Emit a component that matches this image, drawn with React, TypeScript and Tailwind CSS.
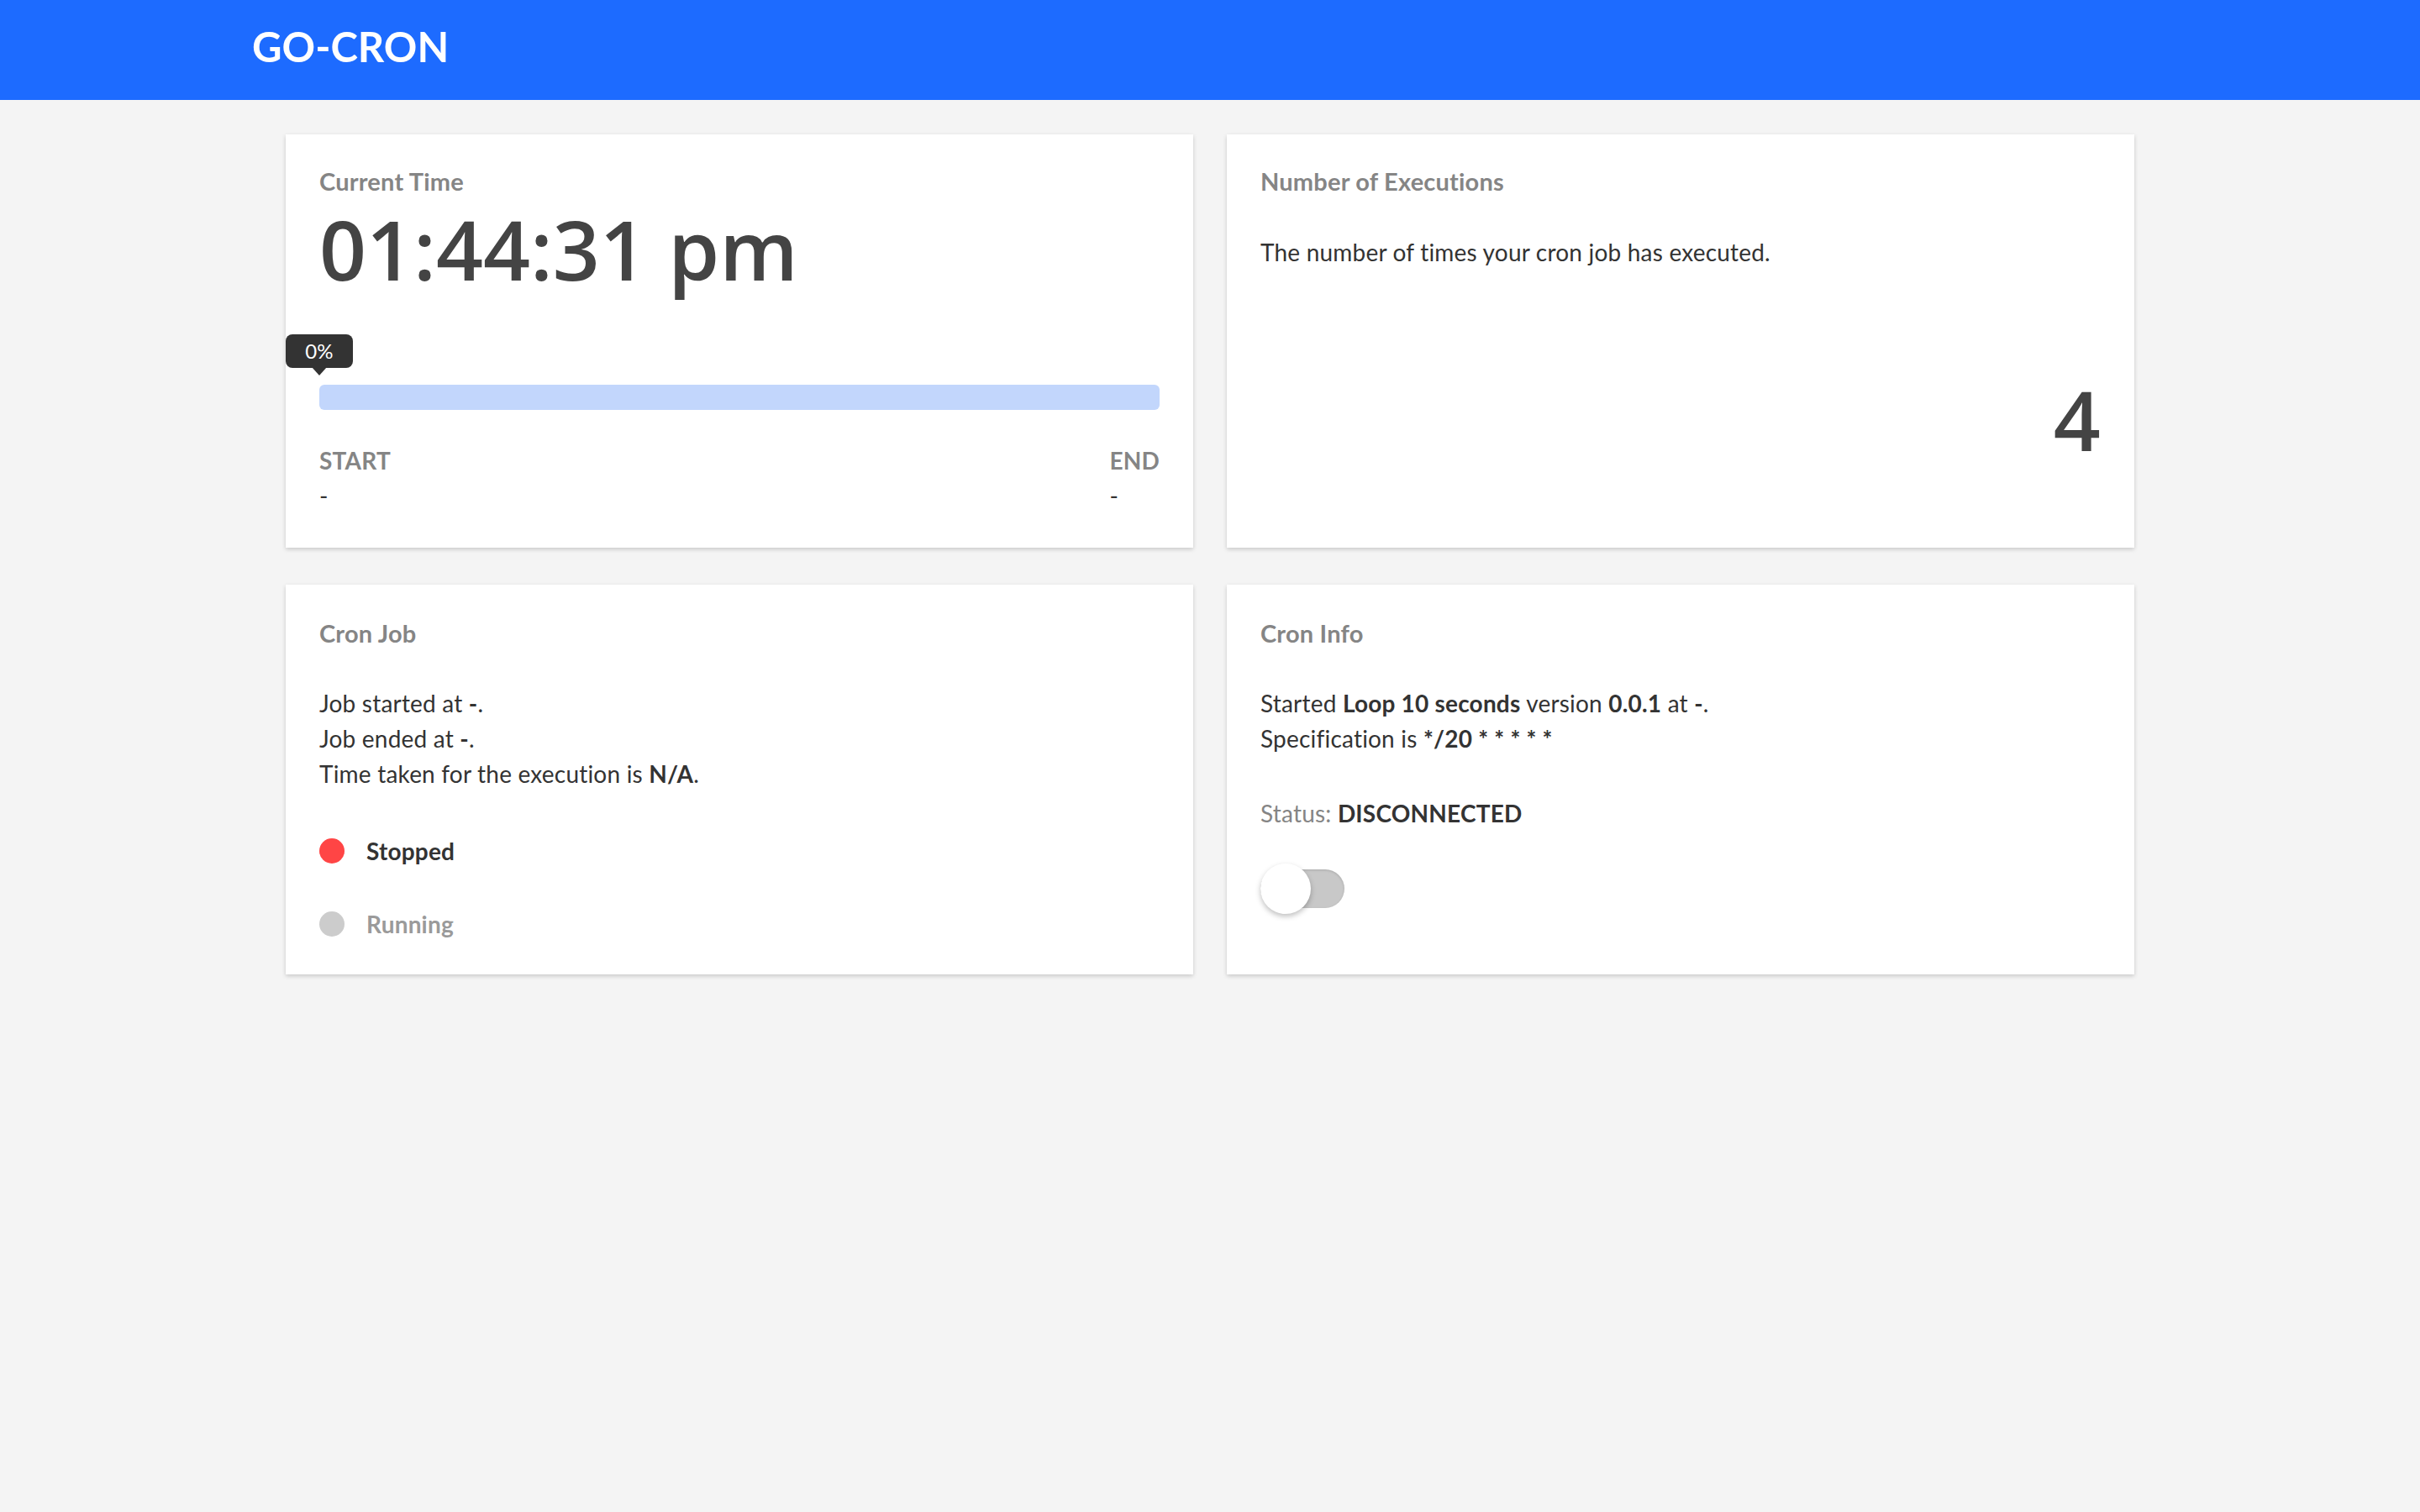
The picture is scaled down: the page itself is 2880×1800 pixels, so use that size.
import React from 'react';

const body = { fontFamily: 'Lato, "Noto Sans", sans-serif' };
const big = { fontFamily: '"Open Sans", "Noto Sans", sans-serif' };

const Card = ({ children, className = '' }: { children: React.ReactNode; className?: string }) => (
  <div className={`bg-white shadow-[0_2px_5px_rgba(0,0,0,0.18)] px-10 pt-[35px] ${className}`}>
    {children}
  </div>
);

const Title = ({ children }: { children: React.ReactNode }) => (
  <div className="text-[29px] leading-[42px] font-bold text-[#858585]">{children}</div>
);

export default function App() {
  return (
    <div className="min-h-screen w-full bg-[#f4f4f4] text-[#333] tracking-[0.2px]" style={body}>
      {/* Header */}
      <header className="h-[119px] w-full bg-[#1d6bff] pl-[300px] pt-[31px]">
        <span className="text-[49px] leading-none font-bold text-white tracking-[0px]">GO-CRON</span>
      </header>

      <main className="pt-[41px] pl-[340px]">
        <div className="grid w-[2200px] grid-cols-2 gap-x-10 gap-y-[44px]">
          {/* Current time */}
          <Card className="h-[492px]">
            <Title>Current Time</Title>
            <div className="mt-[10px] text-[98px] leading-[98px] font-semibold text-[#444] tracking-normal" style={big}>
              01:44:31 pm
            </div>
            <div className="relative mt-[113px] h-[30px] rounded-md bg-[#c2d6fc]">
              <div className="absolute left-[-40px] top-[-60px] flex h-10 w-20 items-center justify-center rounded-lg bg-[#333] text-[24px] text-white">
                0%
                <span className="absolute bottom-[-9px] left-1/2 -translate-x-1/2 border-x-[9px] border-t-[10px] border-x-transparent border-t-[#333]" />
              </div>
            </div>
            <div className="mt-[39px] flex justify-between text-[28px] leading-[42px]">
              <div>
                <div className="font-bold text-[#858585]">START</div>
                <div>-</div>
              </div>
              <div>
                <div className="font-bold text-[#858585]">END</div>
                <div>-</div>
              </div>
            </div>
          </Card>

          {/* Executions */}
          <Card className="flex h-[492px] flex-col">
            <Title>Number of Executions</Title>
            <p className="mt-[42px] text-[28px] leading-[42px]">The number of times your cron job has executed.</p>
            <div className="mt-[129px] text-right text-[98px] leading-[98px] font-semibold text-[#444]" style={big}>
              4
            </div>
          </Card>

          {/* Cron job */}
          <Card className="h-[464px] pt-[37px]">
            <Title>Cron Job</Title>
            <div className="mt-[41px] text-[28px] leading-[42px]">
              <div>Job started at <b>-</b>.</div>
              <div>Job ended at <b>-</b>.</div>
              <div>Time taken for the execution is <b>N/A</b>.</div>
            </div>
            <div className="mt-[50px] flex h-[42px] items-center gap-[26px] text-[28px]">
              <span className="h-[30px] w-[30px] rounded-full bg-[#ff4545]" />
              <span className="font-bold text-[#333]">Stopped</span>
            </div>
            <div className="mt-[45px] flex h-[42px] items-center gap-[26px] text-[28px]">
              <span className="h-[30px] w-[30px] rounded-full bg-[#cccccc]" />
              <span className="font-bold text-[#9a9a9a]">Running</span>
            </div>
          </Card>

          {/* Cron info */}
          <Card className="h-[464px] pt-[37px]">
            <Title>Cron Info</Title>
            <div className="mt-[41px] text-[28px] leading-[42px]">
              <div>
                Started <b>Loop 10 seconds</b> version <b>0.0.1</b> at <b>-</b>.
              </div>
              <div>
                Specification is <b>*/20 * * * * *</b>
              </div>
            </div>
            <div className="mt-[47px] text-[28px] leading-[42px]">
              <span className="text-[#858585]">Status: </span>
              <b>DISCONNECTED</b>
            </div>
            <div className="relative mt-[39px] h-[60px] w-[100px]">
              <div className="absolute left-0 top-[7px] h-[46px] w-[100px] rounded-full bg-[#c8c8c8] shadow-[inset_0_1px_3px_rgba(0,0,0,0.15)]" />
              <div className="absolute left-0 top-0 h-[60px] w-[60px] rounded-full bg-white shadow-[0_3px_6px_rgba(0,0,0,0.25)]" />
            </div>
          </Card>
        </div>
      </main>
    </div>
  );
}
